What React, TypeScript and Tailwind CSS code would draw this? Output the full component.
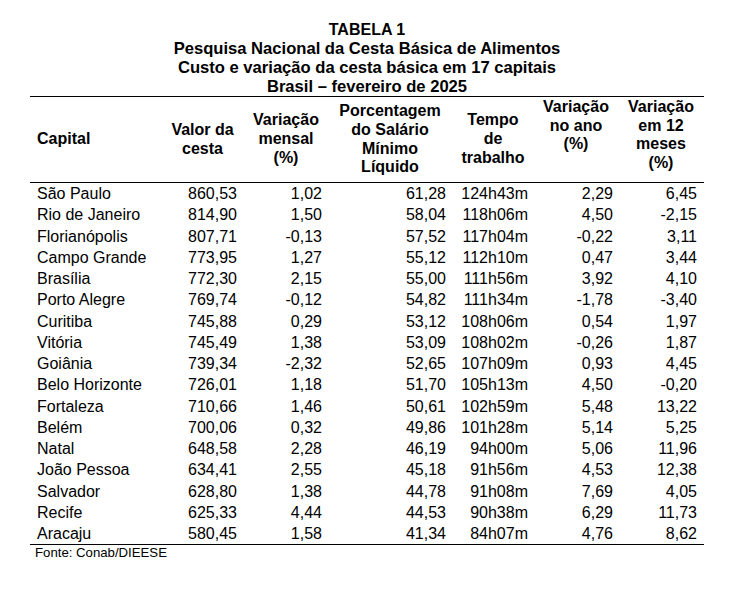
const rows: [string, string, string, string, string, string, string][] = [
  ['São Paulo', '860,53', '1,02', '61,28', '124h43m', '2,29', '6,45'],
  ['Rio de Janeiro', '814,90', '1,50', '58,04', '118h06m', '4,50', '-2,15'],
  ['Florianópolis', '807,71', '-0,13', '57,52', '117h04m', '-0,22', '3,11'],
  ['Campo Grande', '773,95', '1,27', '55,12', '112h10m', '0,47', '3,44'],
  ['Brasília', '772,30', '2,15', '55,00', '111h56m', '3,92', '4,10'],
  ['Porto Alegre', '769,74', '-0,12', '54,82', '111h34m', '-1,78', '-3,40'],
  ['Curitiba', '745,88', '0,29', '53,12', '108h06m', '0,54', '1,97'],
  ['Vitória', '745,49', '1,38', '53,09', '108h02m', '-0,26', '1,87'],
  ['Goiânia', '739,34', '-2,32', '52,65', '107h09m', '0,93', '4,45'],
  ['Belo Horizonte', '726,01', '1,18', '51,70', '105h13m', '4,50', '-0,20'],
  ['Fortaleza', '710,66', '1,46', '50,61', '102h59m', '5,48', '13,22'],
  ['Belém', '700,06', '0,32', '49,86', '101h28m', '5,14', '5,25'],
  ['Natal', '648,58', '2,28', '46,19', '94h00m', '5,06', '11,96'],
  ['João Pessoa', '634,41', '2,55', '45,18', '91h56m', '4,53', '12,38'],
  ['Salvador', '628,80', '1,38', '44,78', '91h08m', '7,69', '4,05'],
  ['Recife', '625,33', '4,44', '44,53', '90h38m', '6,29', '11,73'],
  ['Aracaju', '580,45', '1,58', '41,34', '84h07m', '4,76', '8,62'],
]

const cols = 'grid grid-cols-[131px_83px_84px_124px_82px_84px_86px]'

export default function App() {
  return (
    <div className="min-h-[591px] w-[755px] bg-white text-black font-['Liberation_Sans',Arial,sans-serif]">
      <div className="ml-[30px] w-[674px] pt-[20px]">
        {/* title */}
        <div className="text-center text-[16.6px] font-bold leading-[19px]">
          <p className="text-[16px]">TABELA 1</p>
          <p>Pesquisa Nacional da Cesta Básica de Alimentos</p>
          <p>Custo e variação da cesta básica em 17 capitais</p>
          <p>Brasil – fevereiro de 2025</p>
        </div>

        {/* header */}
        <div className={`${cols} h-[87px] border-t border-b border-black text-[16px] font-bold leading-[18.7px]`}>
          <div className="flex items-center pl-[7px]">Capital</div>
          <div className="flex items-center justify-center text-center">Valor da<br />cesta</div>
          <div className="flex items-center justify-center text-center">Variação<br />mensal<br />(%)</div>
          <div className="flex items-center justify-center text-center">Porcentagem<br />do Salário<br />Mínimo<br />Líquido</div>
          <div className="flex items-center justify-center text-center">Tempo<br />de<br />trabalho</div>
          <div className="pt-[1px] text-center">Variação<br />no ano<br />(%)</div>
          <div className="pt-[1px] text-center">Variação<br />em 12<br />meses<br />(%)</div>
        </div>

        {/* body */}
        <div className="border-b border-black text-[16px] leading-[21.25px]">
          {rows.map((r) => (
            <div key={r[0]} className={cols}>
              <div className="pl-[7px]">{r[0]}</div>
              <div className="pr-[7px] text-right">{r[1]}</div>
              <div className="pr-[6px] text-right">{r[2]}</div>
              <div className="pr-[6px] text-right">{r[3]}</div>
              <div className="pr-[6px] text-right">{r[4]}</div>
              <div className="pr-[5px] text-right">{r[5]}</div>
              <div className="pr-[7px] text-right">{r[6]}</div>
            </div>
          ))}
        </div>

        <p className="pl-[5px] text-[13.2px] leading-[16px]">Fonte: Conab/DIEESE</p>
      </div>
    </div>
  )
}
